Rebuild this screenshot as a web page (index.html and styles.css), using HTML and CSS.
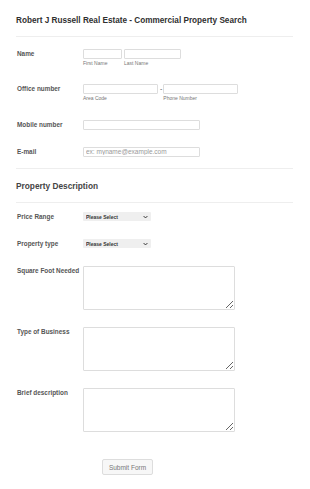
FILE: index.html
```html
<!DOCTYPE html>
<html lang="en">
<head>
  <meta charset="UTF-8" />
  <title>Robert J Russell Real Estate - Commercial Property Search</title>
  <link rel="stylesheet" href="styles.css">
</head>
<body>
  <form class="form-all">
    <div class="form-header">
      <h2>Robert J Russell Real Estate - Commercial Property Search</h2>
    </div>

    <ul class="form-section">
      <li class="form-line">
        <label class="form-label">Name</label>
        <div class="form-input">
          <span class="sub-field">
            <input type="text" class="input-first" />
            <span class="sub-label">First Name</span>
          </span>
          <span class="sub-field">
            <input type="text" class="input-last" />
            <span class="sub-label">Last Name</span>
          </span>
        </div>
      </li>

      <li class="form-line">
        <label class="form-label">Office number</label>
        <div class="form-input">
          <span class="sub-field">
            <input type="text" class="input-phone" />
            <span class="sub-label">Area Code</span>
          </span>
          <span class="phone-sep">-</span>
          <span class="sub-field">
            <input type="text" class="input-phone" />
            <span class="sub-label">Phone Number</span>
          </span>
        </div>
      </li>

      <li class="form-line">
        <label class="form-label">Mobile number</label>
        <div class="form-input">
          <input type="text" class="input-wide" />
        </div>
      </li>

      <li class="form-line">
        <label class="form-label">E-mail</label>
        <div class="form-input">
          <input type="email" class="input-wide" placeholder="ex: myname@example.com" />
        </div>
      </li>

      <li class="form-heading">
        <h3>Property Description</h3>
      </li>

      <li class="form-line first-after-heading">
        <label class="form-label">Price Range</label>
        <div class="form-input">
          <span class="select-wrap">
            <select class="form-select">
              <option>Please Select</option>
            </select>
            <svg class="select-arrow" viewBox="0 0 8 6" width="5" height="4"><path d="M1 1.5 L4 4.5 L7 1.5" fill="none" stroke="#333" stroke-width="1.6"/></svg>
          </span>
        </div>
      </li>

      <li class="form-line">
        <label class="form-label">Property type</label>
        <div class="form-input">
          <span class="select-wrap">
            <select class="form-select">
              <option>Please Select</option>
            </select>
            <svg class="select-arrow" viewBox="0 0 8 6" width="5" height="4"><path d="M1 1.5 L4 4.5 L7 1.5" fill="none" stroke="#333" stroke-width="1.6"/></svg>
          </span>
        </div>
      </li>

      <li class="form-line">
        <label class="form-label">Square Foot Needed</label>
        <div class="form-input">
          <textarea class="form-textarea"></textarea>
        </div>
      </li>

      <li class="form-line">
        <label class="form-label">Type of Business</label>
        <div class="form-input">
          <textarea class="form-textarea"></textarea>
        </div>
      </li>

      <li class="form-line">
        <label class="form-label">Brief description</label>
        <div class="form-input">
          <textarea class="form-textarea"></textarea>
        </div>
      </li>

      <li class="form-buttons">
        <button type="button" class="submit-btn">Submit Form</button>
      </li>
    </ul>
  </form>
</body>
</html>
```

FILE: styles.css
```css
/* Formulario compacto estilo JotForm */
body {
  margin: 0;
  padding: 0;
  background: #fff;
  font-family: "Liberation Sans", Arial, sans-serif;
  color: #555;
}

.form-all {
  padding: 16px 17px 0 16px;
}

.form-header {
  padding-bottom: 10px;
  border-bottom: 1px solid #eee;
}

.form-header h2 {
  margin: 0;
  font-size: 8.2px;
  line-height: 10px;
  font-weight: bold;
  color: #2f2f2f;
}

.form-section {
  list-style: none;
  margin: 0;
  padding: 3px 0 0 0;
}

.form-line {
  display: flex;
  padding: 8.5px 0;
}

.form-label {
  width: 66px;
  flex-shrink: 0;
  padding-left: 1px;
  font-size: 6.4px;
  line-height: 10px;
  font-weight: bold;
  color: #555;
}

.form-input {
  display: flex;
  align-items: flex-start;
}

.sub-field {
  display: flex;
  flex-direction: column;
  margin-right: 2px;
}

.sub-label {
  font-size: 5px;
  line-height: 8.5px;
  color: #777;
}

.phone-sep {
  font-size: 7px;
  line-height: 10px;
  margin: 0 1px 0 0;
  color: #555;
}

input {
  box-sizing: border-box;
  height: 10px;
  margin: 0;
  padding: 0 2px;
  border: 1px solid #ddd;
  border-radius: 1px;
  font-family: "Liberation Sans", Arial, sans-serif;
  font-size: 6.5px;
  color: #555;
  outline: none;
}

input::placeholder {
  color: #999;
}

.input-first {
  width: 39px;
}

.input-last {
  width: 57px;
}

.input-phone {
  width: 75px;
}

.input-wide {
  width: 117px;
}

.form-heading {
  margin-top: 2.5px;
  padding: 12px 0 11px 0;
  border-top: 1px solid #eee;
  border-bottom: 1px solid #eee;
}

.form-heading h3 {
  margin: 0;
  font-size: 8.3px;
  line-height: 10px;
  font-weight: bold;
  color: #444;
}

.first-after-heading {
  margin-top: 1px;
}

.select-wrap {
  position: relative;
  display: block;
  height: 9px;
}

.form-select {
  appearance: none;
  -webkit-appearance: none;
  display: block;
  box-sizing: border-box;
  width: 68px;
  height: 9px;
  margin: 0;
  padding: 0 0 0 3px;
  border: none;
  border-radius: 1px;
  background: #efefef;
  font-family: "Liberation Sans", Arial, sans-serif;
  font-size: 5px;
  font-weight: bold;
  color: #333;
  outline: none;
}

.select-arrow {
  position: absolute;
  right: 3px;
  top: 2.5px;
  pointer-events: none;
}

.form-textarea {
  display: block;
  box-sizing: border-box;
  width: 152px;
  height: 44px;
  margin: 0;
  padding: 2px;
  border: 1px solid #ddd;
  border-radius: 1px;
  resize: both;
  font-family: "Liberation Sans", Arial, sans-serif;
  font-size: 6.5px;
  outline: none;
}

.form-buttons {
  padding: 15px 0 16px 86px;
}

.submit-btn {
  box-sizing: border-box;
  width: 51px;
  height: 16px;
  padding: 0;
  border: 1px solid #ddd;
  border-radius: 2px;
  background: #f7f7f7;
  font-family: "Liberation Sans", Arial, sans-serif;
  font-size: 6.5px;
  color: #777;
  cursor: pointer;
}
```
